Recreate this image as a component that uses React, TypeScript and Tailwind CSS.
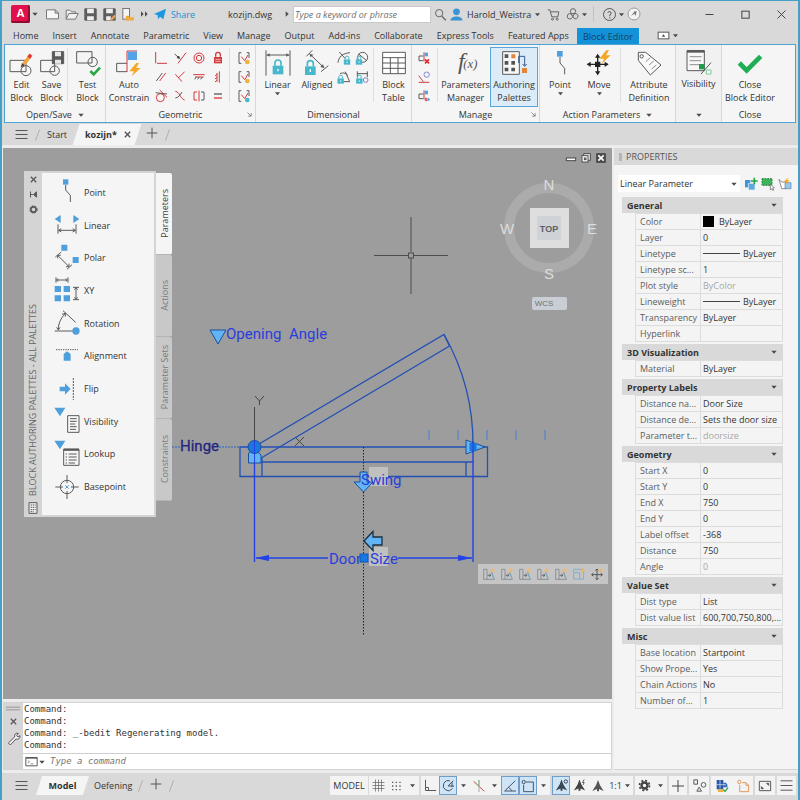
import { useState, type ReactNode } from "react";

type GlyphProps = {
  w: number;
  h?: number;
  color?: string;
  children: ReactNode;
};

// Three drawing units per pixel, origin in the middle of the icon.
function Glyph({ w, h = w, color = "#5a5a5a", children }: GlyphProps) {
  return (
    <svg
      width={w}
      height={h}
      viewBox={`${-1.5 * w} ${-1.5 * h} ${3 * w} ${3 * h}`}
      fill="none"
      stroke={color}
      strokeWidth={3}
      className="block shrink-0"
      aria-hidden="true"
    >
      {children}
    </svg>
  );
}

function Caret({ w = 6 }: { w?: number }) {
  return (
    <Glyph w={w}>
      <path d="M-8 -4 H8 L0 5 Z" fill="#4a4a4a" stroke="none" />
    </Glyph>
  );
}

function Lock({ x, y, s = 1 }: { x: number; y: number; s?: number }) {
  return (
    <g transform={`translate(${x} ${y}) scale(${s})`}>
      <path d="M-9 -6 V-14 A9 9 0 0 1 9 -14 V-6" stroke="#45b8cc" strokeWidth={5} />
      <rect x={-16} y={-6} width={32} height={26} fill="#45b8cc" stroke="none" />
      <path d="M0 3 V11" stroke="#fff" strokeWidth={4} />
    </g>
  );
}

function Bolt({ x, y, s = 1 }: { x: number; y: number; s?: number }) {
  return (
    <path
      transform={`translate(${x} ${y}) scale(${s})`}
      d="M4 -20 L-17 5 H-3 L-10 20 L17 -5 H3 L12 -20 Z"
      fill="#f5a623"
      stroke="none"
    />
  );
}

const menus = [
  "Home",
  "Insert",
  "Annotate",
  "Parametric",
  "View",
  "Manage",
  "Output",
  "Add-ins",
  "Collaborate",
  "Express Tools",
  "Featured Apps",
];

function TitleButton({ label, children }: { label: string; children: ReactNode }) {
  return (
    <button
      type="button"
      aria-label={label}
      className="flex h-5 w-[19px] shrink-0 items-center justify-center"
    >
      {children}
    </button>
  );
}

function TitleBar() {
  return (
    <header className="flex h-[26px] items-center pl-[9px]">
      <button type="button" aria-label="Application menu" className="flex items-center">
        <span className="flex h-[18px] w-[19px] items-start justify-center rounded-xs bg-[#e2104a] text-[11px] leading-[15px] font-bold text-white shadow-[inset_-2px_-2px_0_#8f0c30]">
          A
        </span>
        <span className="ml-px">
          <Caret w={8} />
        </span>
      </button>
      <div className="ml-1 flex">
        <TitleButton label="New">
          <Glyph w={15} color="#777">
            <path d="M-18 -14 H8 L18 -5 V13 H-18 Z M8 -14 V-4 H18" fill="#f7f7f7" />
          </Glyph>
        </TitleButton>
        <TitleButton label="Open">
          <Glyph w={15} color="#777">
            <path d="M-16 14 V-13 H-5 L0 -8 H12 V-3 M-16 14 L-8 -3 H20 L12 14 Z" fill="#f0f0f0" />
          </Glyph>
        </TitleButton>
        <TitleButton label="Save">
          <Glyph w={15}>
            <path d="M-17 -17 H17 V17 H-17 Z" fill="#5f5f5f" />
            <path d="M-10 -17 H10 V-4 H-10 Z M-10 5 H10 V17 H-10 Z" fill="#eee" stroke="none" />
          </Glyph>
        </TitleButton>
        <TitleButton label="Save as">
          <Glyph w={15}>
            <path d="M-17 -17 H17 V17 H-17 Z" fill="#5f5f5f" />
            <path d="M-10 -17 H10 V-4 H-10 Z M-10 5 H4 V17 H-10 Z" fill="#eee" stroke="none" />
            <path d="M4 17 L17 3" stroke="#e3a05e" strokeWidth={7} />
          </Glyph>
        </TitleButton>
        <TitleButton label="Open from mobile">
          <Glyph w={15}>
            <rect x={-17} y={-18} width={20} height={32} fill="#f4f4f4" stroke="#777" />
            <path d="M-8 18 V4 H0 L3 8 H16 V18 Z" fill="#efaa3c" stroke="none" />
          </Glyph>
        </TitleButton>
      </div>
      <button type="button" aria-label="More tools" className="mr-1 w-3">
        <Glyph w={12}>
          <path d="M-9 -8 L-1 0 L-9 8 Z M3 -8 L11 0 L3 8 Z" fill="#4a4a4a" stroke="none" />
        </Glyph>
      </button>
      <button type="button" className="flex items-center gap-1 text-[10px] text-[#1c8fd6]">
        <Glyph w={12}>
          <path d="M-18 0 L18 -16 L10 16 L0 8 L-6 16 L-7 4 Z" fill="#1c96e0" stroke="none" />
        </Glyph>
        <span className="w-[26px] text-[9px]">Share</span>
      </button>
      <h1 className="ml-8 w-[46px]">kozijn.dwg</h1>
      <span className="ml-[10px]">
        <Glyph w={6}>
          <path d="M-4 -8 L5 0 L-4 8 Z" fill="#4a4a4a" stroke="none" />
        </Glyph>
      </span>
      <input
        type="search"
        aria-label="Search"
        placeholder="Type a keyword or phrase"
        className="ml-[3px] h-[17px] max-w-[200px] min-w-[100px] flex-[0_1_138px] border border-[#c9c9c9] bg-white px-px italic placeholder:text-[#707070]"
      />
      <TitleButton label="Search help">
        <Glyph w={13} color="#666">
          <circle cx={-4} cy={-4} r={11} />
          <path d="M4 5 L16 17" strokeWidth={4} />
        </Glyph>
      </TitleButton>
      <button type="button" className="flex items-center gap-[4px]">
        <Glyph w={13}>
          <circle cx={0} cy={-8} r={10} fill="#3d94d4" stroke="none" />
          <path d="M-18 18 C-18 2 18 2 18 18 Z" fill="#3d94d4" stroke="none" />
        </Glyph>
        Harold_Weistra
        <Caret w={5} />
      </button>
      <div className="ml-1 flex items-center">
        <TitleButton label="App store">
          <Glyph w={13} color="#666">
            <path d="M-17 -14 H-11 L-5 7 H13 L16 -8 H-9" />
            <circle cx={-3} cy={14} r={3} />
            <circle cx={11} cy={14} r={3} />
          </Glyph>
        </TitleButton>
        <TitleButton label="Stay connected">
          <Glyph w={14} color="#666">
            <path d="M-4 4 L-8 -8 A8 8 0 1 1 8 -8 L-2 10 A8 8 0 1 1 -10 -1 H10 A8 8 0 1 1 4 14 L-4 2" />
          </Glyph>
        </TitleButton>
        <Caret w={5} />
        <span className="mx-[6px] h-4 w-px bg-[#c2c2c2]" />
        <TitleButton label="Help">
          <Glyph w={15} color="#555">
            <circle cx={0} cy={0} r={18} />
            <path d="M-5 -5 A5 5 0 1 1 1 1 V5 M1 8 V12" />
          </Glyph>
        </TitleButton>
        <Caret w={5} />
        <TitleButton label="Feedback">
          <Glyph w={14}>
            <circle cx={0} cy={0} r={18} fill="#f4f4f4" stroke="#999" />
            <path d="M-9 6 L2 -8 H8 L5 6 L1 -1 Z" fill="#777" stroke="none" />
          </Glyph>
        </TitleButton>
      </div>
      <div className="ml-auto flex gap-[17px] pr-[7px]">
        <TitleButton label="Minimize">
          <Glyph w={13} color="#444">
            <path d="M-12 0 H12" />
          </Glyph>
        </TitleButton>
        <TitleButton label="Maximize">
          <Glyph w={13} color="#444">
            <rect x={-11} y={-10} width={22} height={21} />
          </Glyph>
        </TitleButton>
        <TitleButton label="Close">
          <Glyph w={13} color="#444">
            <path d="M-12 -12 L12 12 M12 -12 L-12 12" />
          </Glyph>
        </TitleButton>
      </div>
    </header>
  );
}

function BigButton({
  label,
  width,
  icon,
  caret,
  active,
}: {
  label: string;
  width: string;
  icon: ReactNode;
  caret?: boolean;
  active?: boolean;
}) {
  return (
    <button
      type="button"
      className={`${width} flex h-[58px] shrink-0 flex-col items-center text-center leading-[13px] whitespace-pre ${
        active ? "bg-[#dcebf8] outline outline-[#5aa5d8]" : ""
      }`}
    >
      <span className="flex h-[30px] items-center">{icon}</span>
      {label}
      {caret && <Caret w={5} />}
    </button>
  );
}

function SmallButton({ label, children }: { label: string; children: ReactNode }) {
  return (
    <button type="button" aria-label={label} className="flex h-[19px] items-center justify-center">
      <Glyph w={14}>{children}</Glyph>
    </button>
  );
}

function Divider() {
  return <span className="mx-[2px] h-[54px] w-px shrink-0 bg-[#dedede]" />;
}

function Group({
  title,
  menu,
  launcher,
  children,
}: {
  title: string;
  menu?: boolean;
  launcher?: boolean;
  children: ReactNode;
}) {
  return (
    <section className="flex shrink-0 flex-col border-r border-[#d8d8d8]">
      <div className="flex h-[62px] pt-[3px]">{children}</div>
      <div className="relative flex h-[15px] items-center justify-center gap-[6px]">
        {title}
        {menu && <Caret />}
        {launcher && (
          <button type="button" aria-label={`${title} settings`} className="absolute right-[2px] bottom-1">
            <Glyph w={7}>
              <path d="M-6 -6 L4 4 M5 -4 V5 H-4" strokeWidth={2} />
            </Glyph>
          </button>
        )}
      </div>
    </section>
  );
}

const R = "#d33a3f";

function Ribbon() {
  return (
    <div className="mr-[2px] ml-[2px] flex overflow-hidden border border-[#4ba3d6] bg-[#f5f5f5]">
      <Group title="Open/Save" menu>
        <BigButton
          label={"Edit\nBlock"}
          width="w-[33px]"
          icon={
            <Glyph w={28}>
              <path d="M-36 -8 H12 V26 H-36 Z" />
              <circle cx={12} cy={23} r={15} />
              <path d="M5 4 L22 -18" stroke="#f2a33c" strokeWidth={11} />
              <path d="M20 -16 L27 -25" stroke="#e23b3b" strokeWidth={11} />
              <path d="M-4 14 L0 0 L9 7 Z" fill="#444" stroke="none" />
            </Glyph>
          }
        />
        <BigButton
          label={"Save\nBlock"}
          width="w-[27px]"
          icon={
            <Glyph w={28}>
              <path d="M-34 -8 H8 V26 H-34 Z" />
              <circle cx={8} cy={23} r={14} />
              <path d="M1 -34 H35 V2 H1 Z" fill="#5a5a5a" />
              <path d="M9 -34 H27 V-20 H9 Z M9 -10 H27 V2 H9 Z" fill="#e8e8e8" stroke="none" />
            </Glyph>
          }
        />
        <Divider />
        <BigButton
          label={"Test\nBlock"}
          width="w-[35px]"
          icon={
            <Glyph w={28}>
              <path d="M-34 -34 H12 V0 H-34 Z" />
              <circle cx={14} cy={-3} r={14} />
              <path d="M7 24 L17 34 L36 14" stroke="#27a844" strokeWidth={8} />
            </Glyph>
          }
        />
      </Group>

      <Group title="Geometric" launcher>
        <BigButton
          label={"Auto\nConstrain"}
          width="w-[46px]"
          icon={
            <Glyph w={28}>
              <path d="M-6 1 H-37 V26 H-6" />
              <path d="M-6 27 V-36 H24" stroke={R} />
              <path d="M-4 -34 H24 V-9 H-4 Z" fill="#55a3e6" stroke="none" />
              <Bolt x={18} y={20} />
            </Glyph>
          }
        />
        <div className="grid w-[75px] grid-cols-4 content-start">
          <SmallButton label="Perpendicular">
            <path d="M-16 -18 V16 M-12 16 H18" stroke={R} />
          </SmallButton>
          <SmallButton label="Coincident">
            <path d="M-16 -12 L2 4" />
            <path d="M-6 16 L18 -16" stroke={R} />
            <circle cx={-5} cy={-2} r={4} fill="#444" stroke="none" />
          </SmallButton>
          <SmallButton label="Concentric">
            <circle cx={0} cy={0} r={15} stroke={R} />
            <circle cx={0} cy={0} r={8} stroke={R} />
          </SmallButton>
          <SmallButton label="Fix">
            <path d="M-7 -4 V-10 A7 7 0 0 1 7 -10 V-4" stroke={R} strokeWidth={4} />
            <rect x={-12} y={-3} width={24} height={19} fill={R} stroke="none" />
            <path d="M-8 4 H8 M-8 10 H8" stroke="#f3b6b8" />
          </SmallButton>
          <SmallButton label="Parallel">
            <path d="M-14 12 L4 -12" />
            <path d="M-4 12 L14 -12" stroke={R} />
          </SmallButton>
          <SmallButton label="Perpendicular lines">
            <path d="M-14 -8 L6 14" stroke={R} />
            <path d="M-5 3 L14 -16" stroke={R} />
          </SmallButton>
          <SmallButton label="Horizontal">
            <path d="M-17 -7 H17 M-12 0 H14" stroke={R} />
            <path d="M-8 0 L-13 7 M1 0 L-4 7 M10 0 L5 7" />
          </SmallButton>
          <SmallButton label="Vertical">
            <path d="M4 -17 V17 M-3 -12 V14" stroke={R} />
            <path d="M-3 -8 L-9 -3 M-3 1 L-9 6 M-3 10 L-9 15" stroke={R} />
          </SmallButton>
          <SmallButton label="Tangent">
            <circle cx={-2} cy={5} r={12} stroke={R} />
            <path d="M-16 -10 L18 -6" />
            <path d="M-4 -18 L18 4" stroke={R} />
          </SmallButton>
          <SmallButton label="Smooth">
            <path d="M-14 -14 C0 -12 -2 6 14 12" stroke={R} />
            <path d="M-14 6 C-4 4 0 -2 6 -12" />
          </SmallButton>
          <SmallButton label="Symmetric">
            <path d="M-6 -12 H-15 V12 H-6 M0 -16 V16" stroke={R} />
            <path d="M6 -12 H15 V12 H6" />
          </SmallButton>
          <SmallButton label="Equal">
            <path d="M-12 -6 H12" strokeWidth={4} />
            <path d="M-12 6 H12" stroke={R} strokeWidth={4} />
          </SmallButton>
        </div>
        <Divider />
        <div className="grid w-[23px] content-start">
          {["#efb23a", "#efb23a", "#45b8cc"].map((dot, i) => (
            <SmallButton key={i} label={["Show/Hide", "Show All", "Hide All"][i]}>
              <path d="M-8 -16 H-15 V16 H-8 M8 -16 H15 V0" />
              <path d="M-8 -4 L2 8 L12 -9" stroke={R} />
              <path d="M10 12 m-7 0 a7 7 0 1 0 14 0 a7 7 0 1 0 -14 0" fill={dot} stroke="none" />
            </SmallButton>
          ))}
        </div>
      </Group>

      <Group title="Dimensional">
        <BigButton
          label="Linear"
          width="w-[43px]"
          caret
          icon={
            <Glyph w={28}>
              <path d="M-36 -38 V38 M36 -38 V38 M-34 -24 H34" />
              <path d="M-34 -24 l9 -5 v10 Z M34 -24 l-9 -5 v10 Z" fill="#5a5a5a" stroke="none" />
              <Lock x={0} y={14} />
            </Glyph>
          }
        />
        <BigButton
          label="Aligned"
          width="w-[36px]"
          icon={
            <Glyph w={28}>
              <path d="M-32 -20 L-14 -38 M12 26 L34 8 M-23 -28 L22 15" />
              <path d="M-23 -28 l12 3 l-8 8 Z M22 15 l-12 -3 l8 -8 Z" fill="#5a5a5a" stroke="none" />
              <Lock x={-20} y={16} />
            </Glyph>
          }
        />
        <div className="grid w-[36px] grid-cols-2 content-start">
          <SmallButton label="Radius">
            <path d="M-18 14 C-16 -4 -4 -14 18 -16 M-14 -18 L4 2" />
            <Lock x={9} y={8} s={0.6} />
          </SmallButton>
          <SmallButton label="Diameter">
            <circle cx={2} cy={-2} r={15} />
            <path d="M-10 -12 L14 8" />
            <Lock x={-9} y={8} s={0.6} />
          </SmallButton>
          <SmallButton label="Angular">
            <path d="M4 -16 L17 14 H-2 M-12 -10 C0 -16 8 -8 12 -4" />
            <Lock x={-10} y={8} s={0.6} />
          </SmallButton>
          <SmallButton label="Convert">
            <path d="M-14 -17 V0 M16 -17 V0 M-14 -10 H16" />
            <Lock x={-8} y={8} s={0.6} />
            <circle cx={11} cy={9} r={7} stroke="#8a7ad0" />
          </SmallButton>
        </div>
        <Divider />
        <BigButton
          label={"Block\nTable"}
          width="w-[35px]"
          icon={
            <Glyph w={26}>
              <path d="M-34 -32 H34 V32 H-34 Z M-34 -16 H34 M-34 0 H34 M-34 16 H34 M-11 -16 V32 M12 -16 V32" fill="#fff" />
            </Glyph>
          }
        />
      </Group>

      <Group title="Manage" launcher>
        <div className="grid w-[23px] content-start">
          <SmallButton label="Delete constraints">
            <path d="M-2 -6 H-15 V8 H-2" />
            <path d="M0 -17 V10" stroke={R} />
            <path d="M2 -16 H12 V-5 H2 Z" fill="#55a3e6" stroke="none" />
            <path d="M3 4 L15 16 M15 4 L3 16" stroke="#e0282d" strokeWidth={5} />
          </SmallButton>
          <SmallButton label="Construction">
            <path d="M-16 16 H16 M-16 -4 L-2 14" stroke={R} />
            <circle cx={8} cy={-7} r={8} stroke="#7f87d6" />
          </SmallButton>
          <SmallButton label="Constraint status">
            <path d="M-2 -6 H-15 V8 H-2" />
            <path d="M0 -17 V10" stroke={R} />
            <path d="M2 -16 H12 V-5 H2 Z" fill="#55a3e6" stroke="none" />
            <path d="M4 7 h5 v7 h-5 Z" stroke={R} />
            <path d="M14 7 v7" stroke="#3f93d3" strokeWidth={5} />
          </SmallButton>
        </div>
        <Divider />
        <BigButton
          label={"Parameters\nManager"}
          width="w-[51px]"
          icon={
            <Glyph w={28}>
              <text
                x={-24}
                y={18}
                fill="#555"
                stroke="none"
                fontFamily="Liberation Serif, serif"
                fontStyle="italic"
                fontSize={72}
              >
                f
                <tspan fontSize={38} dx={-4} dy={-4}>
                  (x)
                </tspan>
              </text>
            </Glyph>
          }
        />
        <BigButton
          label={"Authoring\nPalettes"}
          width="w-[46px]"
          active
          icon={
            <Glyph w={28}>
              <path d="M-34 -34 H16 V34 H-34 Z" fill="#f7f7f7" />
              <path d="M-28 -26 h11 v11 h-11 Z M-28 -6 h11 v11 h-11 Z M-28 14 h11 v11 h-11 Z M-8 -6 h11 v11 h-11 Z M-8 14 h11 v11 h-11 Z" fill="#555" stroke="none" />
              <path d="M-8 -26 h12 v12 h-12 Z M24 15 h15 v15 h-15 Z" fill="#e58435" stroke="none" />
              <path d="M14 0 V-20 H32 V8 M26 3 L32 10 L38 3" stroke="#3c5a86" />
            </Glyph>
          }
        />
        <span className="w-[2px]" />
      </Group>

      <Group title="Action Parameters" menu>
        <BigButton
          label="Point"
          width="w-[40px]"
          caret
          icon={
            <Glyph w={28}>
              <path d="M-9 -36 h17 v17 h-17 Z" fill="#4b9fe0" stroke="none" />
              <path d="M0 -18 V0 L14 16 V34" />
            </Glyph>
          }
        />
        <BigButton
          label="Move"
          width="w-[38px]"
          caret
          icon={
            <Glyph w={28} color="#222">
              <path d="M-34 4 H26 M-4 -24 V34" strokeWidth={4} />
              <path d="M-37 4 l12 -8 v16 Z M29 4 l-12 -8 v16 Z M-4 -28 l-8 12 h16 Z M-4 37 l-8 -12 h16 Z M-12 -4 h16 v16 h-16 Z" fill="#222" stroke="none" />
              <Bolt x={18} y={-18} />
            </Glyph>
          }
        />
        <Divider />
        <BigButton
          label={"Attribute\nDefinition"}
          width="w-[52px]"
          icon={
            <Glyph w={28}>
              <path d="M-32 -32 H-10 L36 6 L4 36 L-32 -8 Z" fill="#fafafa" />
              <circle cx={-22} cy={-20} r={5} />
              <path d="M-10 -4 L4 -16 M0 6 L14 -6 M8 18 L22 6" strokeWidth={2} />
            </Glyph>
          }
        />
      </Group>

      <section className="flex w-[46px] shrink-0 flex-col items-center border-r border-[#d8d8d8] bg-[#f1f1f1] pt-[2px]">
        <button type="button" className="flex flex-col items-center leading-[13px]">
          <span className="flex h-[30px] items-center">
            <Glyph w={26}>
              <path d="M-36 -34 H16 V26 H-36 Z" fill="#f7f7f7" />
              <path d="M-36 -32 H16" strokeWidth={8} />
              <path d="M-28 -16 H8 M-28 -4 H6 M-28 8 H0" strokeWidth={2} />
              <path d="M0 6 h16 v16 h-16 Z" fill="#1f9e4b" stroke="none" />
              <path d="M6 36 L36 2" />
              <path d="M22 24 h14 v12 h-14 Z" fill="#fff" stroke="#7cc796" />
            </Glyph>
          </span>
          Visibility
        </button>
        <button type="button" aria-label="Visibility panel" className="mt-auto pb-[4px]">
          <Caret />
        </button>
      </section>

      <section className="flex w-[56px] shrink-0 flex-col">
        <div className="flex h-[62px] justify-center pt-[3px]">
          <BigButton
            label={"Close\nBlock Editor"}
            width="w-[54px]"
            icon={
              <Glyph w={28}>
                <path d="M-32 0 L-10 22 L32 -20" stroke="#1fae54" strokeWidth={14} />
              </Glyph>
            }
          />
        </div>
        <div className="flex h-[15px] items-center justify-center">Close</div>
      </section>
    </div>
  );
}

const tabFace =
  "relative isolate before:absolute before:inset-0 before:-z-10 before:-skew-x-[18deg] before:bg-[#f5f5f5]";

function Slash() {
  return <span className="h-3 w-px rotate-[20deg] bg-[#b0b0b0]" />;
}

function Burger({ label }: { label: string }) {
  return (
    <button type="button" aria-label={label}>
      <Glyph w={13} color="#555">
        <path d="M-18 -12 H18 M-18 0 H18 M-18 12 H18" />
      </Glyph>
    </button>
  );
}

function Plus({ label }: { label: string }) {
  return (
    <button type="button" aria-label={label}>
      <Glyph w={12} color="#555">
        <path d="M-16 0 H16 M0 -16 V16" />
      </Glyph>
    </button>
  );
}

function FileTabs() {
  return (
    <nav className="flex h-[22px] items-center pt-px pl-[13px]" aria-label="Drawings">
      <Burger label="File tab menu" />
      <span className="ml-[9px] flex">
        <Slash />
      </span>
      <button type="button" className="ml-[9px]">
        Start
      </button>
      <div className={`${tabFace} ml-[9px] flex h-[21px] items-center gap-[7px] pr-[7px] pl-[9px]`}>
        <span className="font-bold">kozijn*</span>
        <button type="button" aria-label="Close kozijn">
          <Glyph w={7} color="#555">
            <path d="M-8 -8 L8 8 M8 -8 L-8 8" strokeWidth={4} />
          </Glyph>
        </button>
      </div>
      <span className="mr-[9px] ml-[8px]">
        <Plus label="New drawing" />
      </span>
      <Slash />
    </nav>
  );
}

const B = "#4f9fdb";

const parameters: { name: string; icon: ReactNode }[] = [
  {
    name: "Point",
    icon: (
      <>
        <path d="M-12 -38 h16 v16 h-16 Z" fill={B} stroke="none" />
        <path d="M-4 -21 V-6 L10 10 V30" />
      </>
    ),
  },
  {
    name: "Linear",
    icon: (
      <>
        <path d="M-37 -18 l18 -12 v24 Z M37 -18 l-18 -12 v24 Z" fill={B} stroke="none" />
        <path d="M-27 -2 V26 M27 -2 V26 M-25 16 H25 M-25 16 l8 -5 M-25 16 l8 5 M25 16 l-8 -5 M25 16 l-8 5" />
      </>
    ),
  },
  {
    name: "Polar",
    icon: (
      <>
        <path d="M-17 -40 h18 v18 h-18 Z M17 -3 h18 v18 h-18 Z" fill={B} stroke="none" />
        <path d="M-35 -3 L-17 -18 M0 34 L15 20 M-28 -8 L6 26 M-28 -8 h9 M-28 -8 v9 M6 26 h-9 M6 26 v-9" />
      </>
    ),
  },
  {
    name: "XY",
    icon: (
      <>
        <path d="M-37 -12 h19 v18 h-19 Z M-10 -12 h19 v18 h-19 Z M-37 16 h19 v18 h-19 Z M-10 16 h19 v18 h-19 Z" fill={B} stroke="none" />
        <path d="M-33 -38 V-22 M3 -38 V-22 M-31 -30 H1 M-26 -34 l-5 4 l5 4 M-4 -34 l5 4 l-5 4 M18 -8 H36 M18 29 H36 M27 -6 V27 M22 -1 l5 -6 l5 6 M22 22 l5 6 l5 -6" />
      </>
    ),
  },
  {
    name: "Rotation",
    icon: (
      <>
        <path d="M-37 24 H20 M-26 20 C-26 0 -18 -14 -6 -28 M-12 -37 L26 -2 M-31 13 l5 8 l5 -8 M-15 -26 l10 -3 l0 10" />
        <circle cx={27} cy={24} r={11} fill={B} stroke="none" />
      </>
    ),
  },
  {
    name: "Alignment",
    icon: (
      <>
        <path d="M-33 -19 H33" strokeDasharray="4 3" />
        <path d="M-10 14 V-6 L0 -14 L11 -6 V14 Z" fill={B} stroke="none" />
      </>
    ),
  },
  {
    name: "Flip",
    icon: (
      <>
        <path d="M-22 -7 H-6 V-17 L11 0 L-6 17 V7 H-22 Z" fill={B} stroke="none" />
        <path d="M19 -33 V33" strokeDasharray="6 3" />
      </>
    ),
  },
  {
    name: "Visibility",
    icon: (
      <>
        <path d="M-38 -40 H-5 L-21 -14 Z" fill={B} stroke="none" />
        <path d="M2 -16 H36 V34 H2 Z" fill="#f7f7f7" />
        <path d="M9 -7 H29 M9 1 H29 M9 9 H25 M9 17 H29 M9 25 H27" />
      </>
    ),
  },
  {
    name: "Lookup",
    icon: (
      <>
        <path d="M-38 -40 H-5 L-21 -14 Z" fill={B} stroke="none" />
        <path d="M-10 -14 H36 V34 H-10 Z" fill="#f7f7f7" />
        <path d="M-10 -13 H36" strokeWidth={7} />
        <path d="M-4 0 H0 M5 0 H29 M-4 9 H0 M5 9 H29 M-4 18 H0 M5 18 H29 M-4 27 H0 M5 27 H24" strokeWidth={3} />
      </>
    ),
  },
  {
    name: "Basepoint",
    icon: (
      <>
        <circle cx={0} cy={0} r={20} />
        <path d="M-35 0 H-12 M12 0 H35 M0 -36 V-12 M0 12 V36" />
        <path d="M-5 -5 L5 5 M5 -5 L-5 5" stroke={B} />
      </>
    ),
  },
];

const paletteTabs = ["Parameters", "Actions", "Parameter Sets", "Constraints"];

function Palette() {
  const [tab, setTab] = useState("Parameters");
  return (
    <aside className="absolute top-[23px] left-[21px] flex" aria-label="Block authoring palettes">
      <div className="flex bg-[#d4d4d4] p-[2px] pl-0">
        <div className="flex w-[18px] flex-col items-center gap-[6px] pt-[2px] pb-px">
          <button type="button" aria-label="Close palette">
            <Glyph w={9}>
              <path d="M-8 -8 L8 8 M8 -8 L-8 8" strokeWidth={4} />
            </Glyph>
          </button>
          <button type="button" aria-label="Auto-hide">
            <Glyph w={9}>
              <path d="M-9 -9 V9 M-9 0 H-2 M9 -8 L0 0 L9 8 Z" fill="#5a5a5a" />
            </Glyph>
          </button>
          <button type="button" aria-label="Palette settings">
            <Glyph w={9}>
              <circle cx={0} cy={0} r={8} strokeWidth={5} />
              <circle cx={0} cy={0} r={11} strokeDasharray="5 4" />
            </Glyph>
          </button>
          <span className="mt-auto rotate-180 leading-[12px] whitespace-nowrap text-[#666] [writing-mode:vertical-rl]">
            BLOCK AUTHORING PALETTES - ALL PALETTES
          </span>
          <Glyph w={12}>
            <path d="M-12 -16 H12 V16 H-12 Z" fill="#eee" />
            <path d="M-7 -9 H8 M-7 -2 H8 M-7 5 H8 M-7 11 H2" strokeDasharray="4 2" />
          </Glyph>
        </div>
        <ul className="grid h-[342px] w-[112px] grid-rows-10 bg-[#f5f5f5] pt-[3px] pb-[12px] pl-[11px]">
          {parameters.map((p) => (
            <li key={p.name} className="flex min-h-0 items-center">
              <button type="button" className="flex items-center gap-[3px]">
                <Glyph w={28}>{p.icon}</Glyph>
                {p.name}
              </button>
            </li>
          ))}
        </ul>
      </div>
      <div className="mt-[2px] flex w-4 flex-col" role="tablist">
        {paletteTabs.map((name) => (
          <button
            key={name}
            type="button"
            role="tab"
            aria-selected={tab === name}
            onClick={() => setTab(name)}
            className={`flex h-[82px] items-center justify-center rounded-r-xs border-b border-[#b4b4b4] ${
              tab === name ? "bg-[#f5f5f5] text-[#444]" : "bg-[#c8c8c8] text-[#7a7a7a]"
            }`}
          >
            <span className="rotate-180 whitespace-nowrap [writing-mode:vertical-rl]">{name}</span>
          </button>
        ))}
      </div>
    </aside>
  );
}

function ViewCube() {
  return (
    <svg
      viewBox="499 176 100 138"
      className="absolute top-[28px] right-[13px] h-[138px] w-[100px]"
      fontFamily="Liberation Sans, sans-serif"
      textAnchor="middle"
      aria-label="View cube"
    >
      <circle cx={549} cy={228} r={40} fill="none" stroke="#ababab" strokeWidth={10} />
      <rect x={530} y={208} width={39} height={40} fill="#dedede" />
      <rect x={537} y={216} width={24} height={24} fill="#cfd2d6" />
      <text x={549} y={232} fontSize={9} fontWeight="bold" fill="#5c6066">
        TOP
      </text>
      <g fontSize={15} fill="#dcdcdc">
        <text x={549} y={190}>
          N
        </text>
        <text x={549} y={279}>
          S
        </text>
        <text x={507} y={234}>
          W
        </text>
        <text x={592} y={234}>
          E
        </text>
      </g>
      <rect x={532} y={297} width={35} height={13} rx={2} fill="#c9ced4" />
      <text x={544} y={306} fontSize={8} fill="#6c7178">
        WCS
      </text>
    </svg>
  );
}

function Drawing() {
  return (
    <svg
      viewBox="3 148 609 550"
      className="absolute top-0 left-0 h-[550px] w-[609px]"
      fill="none"
      stroke="#2450b4"
      fontFamily="Roboto, sans-serif"
      fontSize={15}
      aria-label="Door block drawing"
    >
      {/* crosshair */}
      <g stroke="#4d4d4d">
        <path d="M374 255.500 H408 M414 255.500 H448 M411 217 V252 M411 258 V294" />
        <rect x={408.5} y={253} width={5} height={5} />
      </g>

      {/* frame and door leaf */}
      <path d="M240 447 H487.500 V476.500 H240 Z M254 462 H473 M466 462 V476 M262 457 V476" strokeWidth={1.3} />
      <path d="M254 447 L444 334.500 L449.500 346 L262 457.500" strokeWidth={1.3} />
      <path d="M444 334.500 A222 222 0 0 1 473 447" strokeWidth={1.3} />

      {/* value set ticks */}
      <path d="M429 430 V440 M458 430 V440 M487 430 V440 M516 430 V440 M545 430 V440" stroke="#4b7fd0" />

      {/* axes */}
      <path
        d="M254.500 407 V447 M255 396 L259.500 401 L264 396 M259.500 401 V405 M295 437 L304 446 M304 437 L295 446"
        stroke="#444"
      />
      <path d="M172 447 H180 M219 447 H254" stroke="#2d62c8" strokeDasharray="2 1" />

      {/* dimension */}
      <g stroke="#2343e6">
        <path d="M254.500 447 V562 M473 447 V562" strokeWidth={1.4} />
        <path d="M256 558 H328 M398 558 H472" strokeWidth={1.4} />
        <path d="M255 558 L269 555 V561 Z M472 558 L458 555 V561 Z" fill="#2343e6" stroke="none" />
      </g>
      <path d="M363.500 447 V636" stroke="#222" strokeDasharray="1.500 1.500" />

      <rect x={369} y={467} width={19} height={19} fill="#c0c0be" stroke="none" />
      <rect x={369} y={547} width={19} height={19} fill="#c0c0be" stroke="none" />

      {/* grips */}
      <g fill="#63b4f5" stroke="#1d4f9a">
        <path d="M210 330 H226 L218 344 Z" />
        <path d="M248.500 463 V453 L254.500 449 L261 455 V463 Z" />
        <circle cx={254.5} cy={447} r={6.5} fill="#1b76e0" />
        <path d="M466 440 L485 447 L466 454 Z" />
        <path d="M469.500 443 h7 v8 h-7 Z" fill="#1b76e0" stroke="none" />
        <path d="M360 472 H367 V482 H373 L363.500 492 L354 482 H360 Z" />
        <path d="M364 541 L373 531.500 V537 H382 V545 H373 V550.500 Z" stroke="#1c2f40" strokeWidth={1.3} />
      </g>
      <path d="M254.500 441 V463 M473 441 V453" stroke="#2343e6" />

      <g fill="#2a3ddc" stroke="none">
        <text x={226} y={339}>
          Opening
          <tspan x={289}>Angle</tspan>
        </text>
        <text x={361} y={485}>
          Swing
        </text>
        <text x={329} y={564}>
          Door
          <tspan x={370}>Size</tspan>
        </text>
        <text x={180} y={451} fill="#22267e" stroke="#22267e" strokeWidth={0.3}>
          Hinge
        </text>
      </g>
      <rect x={360} y={554} width={8} height={8} fill="#1677e2" stroke="#1059b5" />
    </svg>
  );
}

function ConstraintBar() {
  return (
    <div className="absolute bottom-[115px] left-[475px] flex h-5 items-center bg-[#c5c5c5] px-[2px]">
      {[0, 1, 2, 3, 4, 5, 6].map((i) => (
        <button
          key={i}
          type="button"
          aria-label={`Action ${i + 1}`}
          className="flex w-[18px] items-center justify-center"
        >
          <Glyph w={14} color="#8c9197">
            {i < 5 && (
              <>
                <path d="M-16 -14 H-6 V16 H-16 Z M-6 16 H16 L8 -6" />
                <path d="M16 16 L6 -4" stroke="#79b4da" />
                <path d="M-4 4 H5 M1 0 L6 4 L1 8" stroke="#444" strokeWidth={2} />
              </>
            )}
            {i === 5 && <path d="M-16 -4 H2 V15 H-16 Z M-16 -4 V-14 H14 V15 H2" stroke="#7faed0" />}
            {i === 6 && (
              <path d="M-16 2 H16 M0 -15 V17 M-11 -3 L-16 2 L-11 7 M11 -3 L16 2 L11 7 M-5 -10 L0 -15 L5 -10 M-5 12 L0 17 L5 12" stroke="#555" />
            )}
            <path d="M11 -19 L14 -13 L20 -11 L14 -8 L12 -2 L8 -8 L2 -10 L8 -13 Z" fill="#e9b872" stroke="none" />
          </Glyph>
        </button>
      ))}
    </div>
  );
}

function Canvas() {
  return (
    <section className="relative mt-[3px] min-h-[551px] flex-1 overflow-hidden bg-[#9d9d9d]" aria-label="Drawing area">
      <Drawing />
      <Palette />
      <ViewCube />
      <ConstraintBar />
      <div className="absolute top-1 right-[5px] flex gap-[3px]">
        <button type="button" aria-label="Minimize drawing">
          <Glyph w={12} color="#4a4a4a">
            <rect x={-14} y={0} width={28} height={8} fill="#fff" />
          </Glyph>
        </button>
        <button type="button" aria-label="Restore drawing">
          <Glyph w={12} color="#4a4a4a">
            <path d="M-7 -7 V-13 H13 V7 H7" fill="#eee" />
            <rect x={-12} y={-7} width={18} height={19} fill="#fff" />
            <rect x={-5} y={0} width={5} height={5} />
          </Glyph>
        </button>
        <button type="button" aria-label="Close drawing">
          <Glyph w={12} color="#4a4a4a">
            <rect x={-13} y={-13} width={26} height={26} fill="#4a4a4a" />
            <path d="M-8 -8 L8 8 M8 -8 L-8 8" stroke="#fff" strokeWidth={5} />
          </Glyph>
        </button>
      </div>
    </section>
  );
}

type Row = { name: string; value: string; muted?: boolean; line?: boolean; swatch?: boolean };

const sections: { title: string; rows: Row[] }[] = [
  {
    title: "General",
    rows: [
      { name: "Color", value: "ByLayer", swatch: true },
      { name: "Layer", value: "0" },
      { name: "Linetype", value: "ByLayer", line: true },
      { name: "Linetype sc...", value: "1" },
      { name: "Plot style", value: "ByColor", muted: true },
      { name: "Lineweight", value: "ByLayer", line: true },
      { name: "Transparency", value: "ByLayer" },
      { name: "Hyperlink", value: "" },
    ],
  },
  { title: "3D Visualization", rows: [{ name: "Material", value: "ByLayer" }] },
  {
    title: "Property Labels",
    rows: [
      { name: "Distance na...", value: "Door Size" },
      { name: "Distance de...", value: "Sets the door size" },
      { name: "Parameter t...", value: "doorsize", muted: true },
    ],
  },
  {
    title: "Geometry",
    rows: [
      { name: "Start X", value: "0" },
      { name: "Start Y", value: "0" },
      { name: "End X", value: "750" },
      { name: "End Y", value: "0" },
      { name: "Label offset", value: "-368" },
      { name: "Distance", value: "750" },
      { name: "Angle", value: "0", muted: true },
    ],
  },
  {
    title: "Value Set",
    rows: [
      { name: "Dist type", value: "List" },
      { name: "Dist value list", value: "600,700,750,800,..." },
    ],
  },
  {
    title: "Misc",
    rows: [
      { name: "Base location", value: "Startpoint" },
      { name: "Show Prope...", value: "Yes" },
      { name: "Chain Actions", value: "No" },
      { name: "Number of...", value: "1" },
    ],
  },
];

function Properties() {
  return (
    <aside className="mt-[3px] mb-[3px] ml-[2px] w-[184px] shrink-0 border-b border-[#d4d4d4] bg-[#f4f4f4]">
      <h2 className="flex h-[17px] items-center gap-1 bg-[#d9d9d9] pl-[5px] text-[#555]">
        <span className="h-2 w-[3px] bg-[#b5b5b5]" />
        PROPERTIES
      </h2>
      <div className="mt-[10px] flex items-center pr-[6px] pl-[4px]">
        <div className="relative mr-auto w-[122px]">
          <select
            aria-label="Selected object"
            className="h-[17px] w-full appearance-none bg-white pl-[2px]"
          >
            <option>Linear Parameter</option>
          </select>
          <span className="pointer-events-none absolute top-[6px] right-[3px]">
            <Caret />
          </span>
        </div>
        <button type="button" aria-label="Toggle pickadd" className="mr-[3px]">
          <Glyph w={14}>
            <path d="M-18 -12 h16 v22 h-16 Z" fill="#3f93d3" stroke="none" />
            <path d="M-8 -2 h20 v20 h-20 Z" fill="#5fa8de" stroke="#f4f4f4" strokeWidth={2} />
            <path d="M10 -19 V1 M0 -9 H20" stroke="#25a548" strokeWidth={5} />
          </Glyph>
        </button>
        <button type="button" aria-label="Select objects" className="mr-[3px]">
          <Glyph w={14}>
            <path d="M-18 -16 h30 v20 h-30 Z" fill="#3eb45c" stroke="#25803c" strokeDasharray="5 3" />
            <path d="M7 0 V18 L11 14 L15 20 L17 18 L14 12 H19 Z" fill="#fff" strokeWidth={2} />
          </Glyph>
        </button>
        <button type="button" aria-label="Quick select">
          <Glyph w={14}>
            <path d="M-18 -14 L-10 14 H4 V-6 H-10 Z" fill="#fff" strokeWidth={2} />
            <path d="M0 -4 h18 v18 h-18 Z" fill="#9cc6e6" stroke="#4f86b5" strokeWidth={2} />
            <path d="M10 -20 L-4 -6 H3 L0 2 L14 -11 H6 Z" fill="#f5a623" stroke="none" />
          </Glyph>
        </button>
      </div>
      <div className="mt-[5px] flex flex-col gap-[2px] pr-[15px] pl-[8px]">
        {sections.map((s) => (
          <section key={s.title}>
            <h3>
              <button
                type="button"
                className="flex h-4 w-full items-center justify-between bg-[#d9d9d9] pr-[6px] pl-[5px] font-bold"
              >
                {s.title}
                <Caret />
              </button>
            </h3>
            <div className="pl-[13px]">
              <table className="w-full table-fixed border-collapse leading-[15px]">
                <tbody>
                  {s.rows.map((r) => (
                    <tr key={r.name} className="h-4">
                      <th
                        scope="row"
                        className="w-[65px] border border-[#dcdcdc] py-0 pl-1 text-left font-normal whitespace-nowrap text-[#5c5c5c]"
                      >
                        {r.name}
                      </th>
                      <td
                        className={`border border-[#dcdcdc] py-0 pl-[2px] whitespace-nowrap ${
                          r.muted ? "text-[#a8a8a8]" : ""
                        }`}
                      >
                        <span className="flex items-center">
                          {r.swatch && <span className="mr-[5px] h-[11px] w-[11px] bg-black" />}
                          {r.line && <span className="mr-[3px] h-px w-[37px] bg-[#444]" />}
                          {r.value}
                        </span>
                      </td>
                    </tr>
                  ))}
                </tbody>
              </table>
            </div>
          </section>
        ))}
      </div>
    </aside>
  );
}

function CommandLine() {
  return (
    <section
      className="mt-[3px] mb-[3px] flex h-[68px] border border-[#d4d4d4] bg-white font-['DejaVu_Sans_Mono',monospace]"
      aria-label="Command line"
    >
      <div className="flex w-[19px] shrink-0 flex-col items-center gap-[6px] bg-[#d6d6d6] pt-[3px]">
        <Glyph w={15} h={5}>
          <path d="M-21 -4 H21 M-21 4 H21" strokeDasharray="3 3" />
        </Glyph>
        <button type="button" aria-label="Close command line">
          <Glyph w={9}>
            <path d="M-8 -8 L8 8 M8 -8 L-8 8" strokeWidth={4} />
          </Glyph>
        </button>
        <button type="button" aria-label="Customize">
          <Glyph w={14}>
            <path d="M-17 12 L2 -6 C0 -14 6 -19 13 -17 L8 -11 L12 -6 L18 -10 C19 -2 12 3 6 0 L-11 18 Z" fill="#eee" />
          </Glyph>
        </button>
      </div>
      <div className="flex min-w-0 flex-1 flex-col">
        <div className="h-[50px] overflow-hidden pl-px leading-[12px]">
          <p>Command:</p>
          <p>Command:</p>
          <p>Command: _-bedit Regenerating model.</p>
          <p>Command:</p>
        </div>
        <div className="flex flex-1 items-center border-t border-[#cfcfcf] pl-[2px]">
          <button type="button" aria-label="Recent commands" className="flex items-center gap-px">
            <Glyph w={13}>
              <path d="M-17 -12 H17 V13 H-17 Z" fill="#fff" />
              <path d="M-17 -11 H17" strokeWidth={5} />
              <path d="M-11 -3 L-6 1 L-11 5 M-3 7 H6" strokeWidth={2} />
            </Glyph>
            <Caret />
          </button>
          <input
            aria-label="Command"
            placeholder="Type a command"
            className="ml-[5px] min-w-0 flex-1 italic outline-none placeholder:text-[#777]"
          />
        </div>
      </div>
    </section>
  );
}

function Cell({
  label,
  width,
  on,
  gap,
  children,
}: {
  label: string;
  width: string;
  on?: boolean;
  gap?: boolean;
  children: ReactNode;
}) {
  return (
    <button
      type="button"
      aria-label={label}
      className={`${width} flex h-[19px] shrink-0 items-center justify-center ${gap ? "mr-[2px]" : ""} ${
        on ? "border border-[#6f9fc8] bg-[#cfe5f7]" : "bg-[#f3f3f3]"
      }`}
    >
      {children}
    </button>
  );
}

function CaretCell({ gap }: { gap?: boolean }) {
  return (
    <Cell label="Options" width="w-[13px]" gap={gap}>
      <Caret w={5} />
    </Cell>
  );
}

const person = "M0 -18 L6 -2 L17 15 L3 9 V16 H-3 V9 L-17 15 L-6 -2 Z";

function StatusBar() {
  return (
    <footer className="flex h-[27px] items-start pt-[3px] pr-[2px] pl-[13px]">
      <div className="flex h-[19px] shrink-0 items-center">
        <Burger label="Layout menu" />
        <button type="button" className={`${tabFace} ml-[11px] h-[19px] w-[47px] font-bold`}>
          Model
        </button>
        <button type="button" className="ml-[8px]">
          Oefening
        </button>
        <span className="ml-[8px] flex">
          <Slash />
        </span>
        <span className="mx-[9px]">
          <Plus label="New layout" />
        </span>
        <Slash />
      </div>
      <div className="ml-auto flex">
        <button type="button" className="mr-px h-[19px] w-[38px] bg-[#f3f3f3]">
          MODEL
        </button>
        <Cell label="Grid" width="w-[19px]">
          <Glyph w={13}>
            <path d="M-18 -9 H18 M-18 0 H18 M-18 9 H18 M-9 -18 V18 M0 -18 V18 M9 -18 V18" strokeWidth={2} />
          </Glyph>
        </Cell>
        <Cell label="Snap" width="w-[18px]">
          <Glyph w={12}>
            <path d="M-15 -11 H17 M-15 0 H17 M-15 11 H17" strokeDasharray="4 7" strokeWidth={4} />
          </Glyph>
        </Cell>
        <CaretCell gap />
        <Cell label="Ortho" width="w-[18px]">
          <Glyph w={13}>
            <path d="M-15 -17 V15 H17 M-15 6 H-6 V15" />
          </Glyph>
        </Cell>
        <Cell label="Polar tracking" width="w-[18px]" on>
          <Glyph w={14}>
            <path d="M13 8 A15 15 0 1 1 6 -15 M0 0 H18 M0 0 L16 -16 M12 -12 L12 4" stroke="#456" />
          </Glyph>
        </Cell>
        <CaretCell />
        <Cell label="Isometric drafting" width="w-[18px]">
          <Glyph w={14}>
            <path d="M-16 -14 L16 16" stroke="#c24848" />
            <path d="M0 -18 V0" stroke="#4fa564" />
            <path d="M0 0 V18" stroke="#aaa" />
          </Glyph>
        </Cell>
        <CaretCell />
        <Cell label="Object snap tracking" width="w-[18px]" on>
          <Glyph w={14}>
            <path d="M16 -16 L-16 15 H18 M-4 4 L6 14" stroke="#456" />
          </Glyph>
        </Cell>
        <Cell label="Object snap" width="w-[18px]" on>
          <Glyph w={14}>
            <path d="M-6 -12 H16 V17 H-13 V-4" stroke="#456" />
            <circle cx={-13} cy={-12} r={5} stroke="#456" />
          </Glyph>
        </Cell>
        <CaretCell gap />
        <Cell label="Annotation visibility" width="w-[18px]" on>
          <Glyph w={15}>
            <path d={person} fill="#3c4754" stroke="none" />
            <circle cx={13} cy={-12} r={5} stroke="#3c4754" />
          </Glyph>
        </Cell>
        <Cell label="Auto scale" width="w-[19px]">
          <Glyph w={15}>
            <path d={person} fill="#444" stroke="none" />
            <path d="M14 -18 L9 -9 H14 L11 -2" strokeWidth={3} />
          </Glyph>
        </Cell>
        <Cell label="Annotation scale" width="w-[17px]">
          <Glyph w={14}>
            <path d={person} fill="#555" stroke="none" />
          </Glyph>
        </Cell>
        <Cell label="Scale 1:1" width="w-[27px]" gap>
          <span className="mr-[3px] text-[#333]">1:1</span>
          <Caret w={5} />
        </Cell>
        <Cell label="Workspace" width="w-[19px]">
          <Glyph w={13}>
            <circle cx={0} cy={0} r={9} strokeWidth={7} stroke="#444" />
            <circle cx={0} cy={0} r={15} strokeWidth={5} strokeDasharray="6 5.800" stroke="#444" />
          </Glyph>
        </Cell>
        <CaretCell gap />
        <Cell label="Annotation monitor" width="w-[18px]" gap>
          <Glyph w={14}>
            <path d="M-18 0 H18 M0 -18 V18" stroke="#444" />
          </Glyph>
        </Cell>
        <Cell label="Isolate objects" width="w-[20px]" gap>
          <Glyph w={15}>
            <path d="M-17 -17 H-6 V-4 H-17 Z M-8 17 L-1 5 L6 17 Z" />
            <circle cx={12} cy={-2} r={7} />
          </Glyph>
        </Cell>
        <Cell label="Trusted file" width="w-[21px]">
          <Glyph w={14}>
            <path d="M-16 -18 H4 V10 H-16 Z" fill="#2657a8" stroke="none" />
            <path d="M4 -10 H12 L16 -4 V4 H4 Z" fill="#2f6cc0" stroke="none" />
            <path d="M-16 -4 H12 M-6 -18 V8" stroke="#f3f3f3" strokeWidth={2} />
            <path d="M-12 10 H4 V18 H-12 Z" fill="#efb23a" stroke="none" />
            <path d="M4 11 L9 16 L18 5" stroke="#27a844" strokeWidth={4} />
          </Glyph>
        </Cell>
        <Cell label="Notifications" width="w-[21px]" gap>
          <Glyph w={14}>
            <path d="M-10 -4 V17 H17 V-2 L9 -10 H-2 M9 -10 V-2 H17" stroke="#e79a5c" />
            <circle cx={-11} cy={-12} r={5} stroke="#e79a5c" />
          </Glyph>
        </Cell>
        <Cell label="Clean screen" width="w-[20px]" gap>
          <Glyph w={14}>
            <path d="M-17 -14 H17 V14 H-17 Z" strokeWidth={3} />
            <path d="M5 -8 H11 V-2 Z M-11 2 V8 H-5 Z" fill="#555" />
          </Glyph>
        </Cell>
        <Cell label="Customization" width="w-[19px]">
          <Glyph w={13}>
            <path d="M-18 -14 H18 M-18 0 H18 M-18 14 H18" />
          </Glyph>
        </Cell>
      </div>
    </footer>
  );
}

export default function App() {
  return (
    <div className="flex min-h-screen flex-col border-x-2 border-y border-[#45a0c8] bg-[#d9d9d9] font-['Open_Sans','Noto_Sans',sans-serif] text-[9px] leading-[13px] text-[#333]">
      <TitleBar />
      <nav className="flex h-[17px] items-center gap-[14px] pl-[11px]" aria-label="Ribbon tabs">
        {menus.map((m) => (
          <button key={m} type="button" className="whitespace-nowrap">
            {m}
          </button>
        ))}
        <button
          type="button"
          aria-current="page"
          className="-ml-[6px] h-4 w-[62px] self-end bg-[#1492d8] whitespace-nowrap text-[#12405f]"
        >
          Block Editor
        </button>
        <button type="button" aria-label="Minimize ribbon" className="ml-1 flex items-center gap-[3px]">
          <Glyph w={13} h={9}>
            <rect x={-16} y={-10} width={32} height={20} fill="#fff" />
            <path d="M-5 4 L0 -4 L5 4 Z" fill="#444" stroke="none" />
          </Glyph>
          <Caret w={5} />
        </button>
      </nav>
      <Ribbon />
      <FileTabs />
      <main className="flex flex-1 bg-[#ececec]">
        <div className="flex min-w-0 flex-1 flex-col pl-px">
          <Canvas />
          <CommandLine />
        </div>
        <Properties />
      </main>
      <StatusBar />
    </div>
  );
}
